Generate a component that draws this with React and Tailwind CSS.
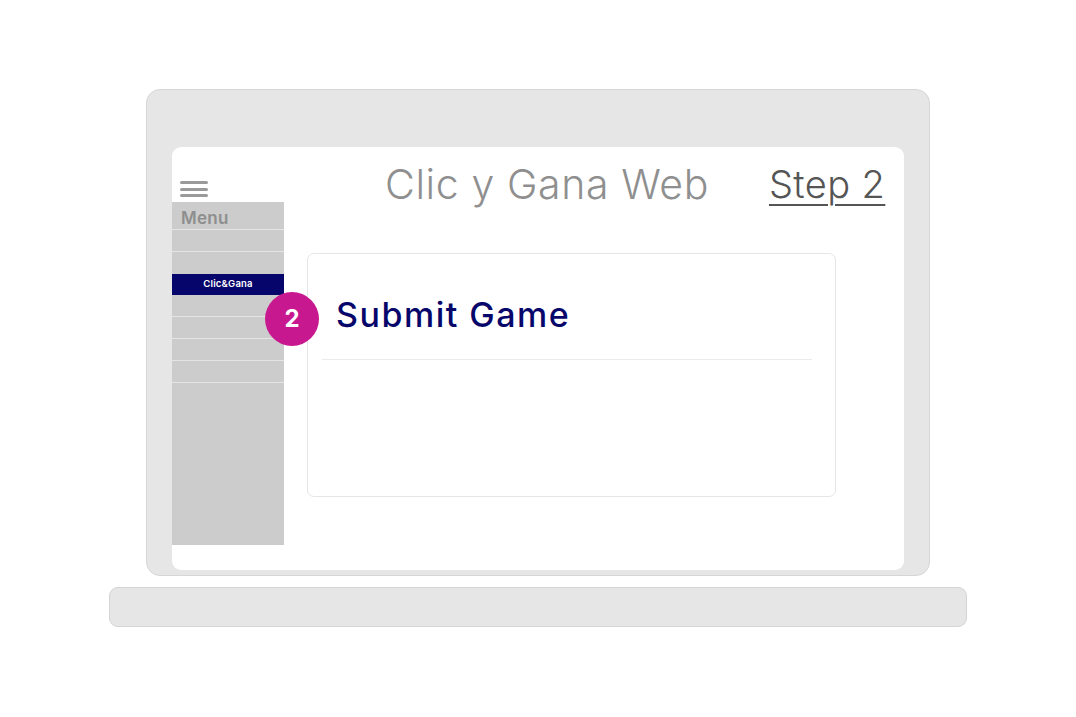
import React from "react";

const font = { fontFamily: "Inter, 'Open Sans', sans-serif" };

function Sidebar() {
  const rows = ["", "", "Clic&Gana", "", "", "", ""];
  return (
    <div className="w-[112px] h-[343px] bg-[#cccccc] flex flex-col">
      <div className="h-[28px] border-b border-[#e4e4e4] pl-[9px] pt-[7px] text-[17px] leading-[19px] font-semibold text-[#8e8e8e] tracking-[0.3px]">
        Menu
      </div>
      {rows.map((label, i) =>
        label ? (
          <div
            key={i}
            className="h-[21px] bg-[#05056b] text-white text-[9.5px] font-semibold flex items-center justify-center tracking-[0.2px]"
          >
            {label}
          </div>
        ) : (
          <div
            key={i}
            className={
              "h-[22px] " + (i === 1 ? "" : "border-b border-[#e4e4e4]")
            }
          />
        )
      )}
    </div>
  );
}

export default function App() {
  return (
    <div className="w-[1076px] h-[717px] bg-white flex flex-col items-center pt-[89px]" style={font}>
      <div className="w-[784px] h-[487px] bg-[#e6e6e6] border border-[#d6d6d6] rounded-[14px] pt-[57px] px-[25px] pb-[5px]">
        <div className="w-[732px] h-[423px] bg-white rounded-[9px] flex">
          <div className="w-[113px] flex flex-col">
            <div className="h-[55px] pt-[34px] pl-[8px] flex flex-col gap-[3.5px]">
              <div className="w-[28px] h-[3px] rounded-full bg-[#9a9a9a]" />
              <div className="w-[28px] h-[3px] rounded-full bg-[#9a9a9a]" />
              <div className="w-[28px] h-[3px] rounded-full bg-[#9a9a9a]" />
            </div>
            <Sidebar />
          </div>
          <div className="flex-1 flex flex-col">
            <div className="h-[106px] flex items-start pt-[13px]">
              <div className="ml-[100px] text-[41px] leading-[48px] font-light text-[#8f8f8f] tracking-[0.6px]">
                Clic y Gana Web
              </div>
              <div className="ml-[60px] text-[38px] leading-[48px] font-light text-[#555555] tracking-[0.4px] underline decoration-[2px] underline-offset-[6px]">
                Step 2
              </div>
            </div>
            <div className="ml-[22px] w-[529px] h-[244px] border border-[#e6e6e6] rounded-[7px] relative">
              <div className="absolute left-[-43px] top-[38px] w-[54px] h-[54px] rounded-full bg-[#c8188f] text-white text-[24px] font-bold flex items-center justify-center">
                2
              </div>
              <div className="pl-[28px] pt-[40px] h-[105px] text-[34px] leading-[42px] font-medium text-[#07076b] tracking-[1.5px]">
                Submit Game
              </div>
              <div className="ml-[14px] w-[490px] h-px bg-[#ebebeb]" />
            </div>
          </div>
        </div>
      </div>
      <div className="mt-[11px] w-[858px] h-[40px] bg-[#e6e6e6] border border-[#d4d4d4] rounded-[9px]" />
    </div>
  );
}
